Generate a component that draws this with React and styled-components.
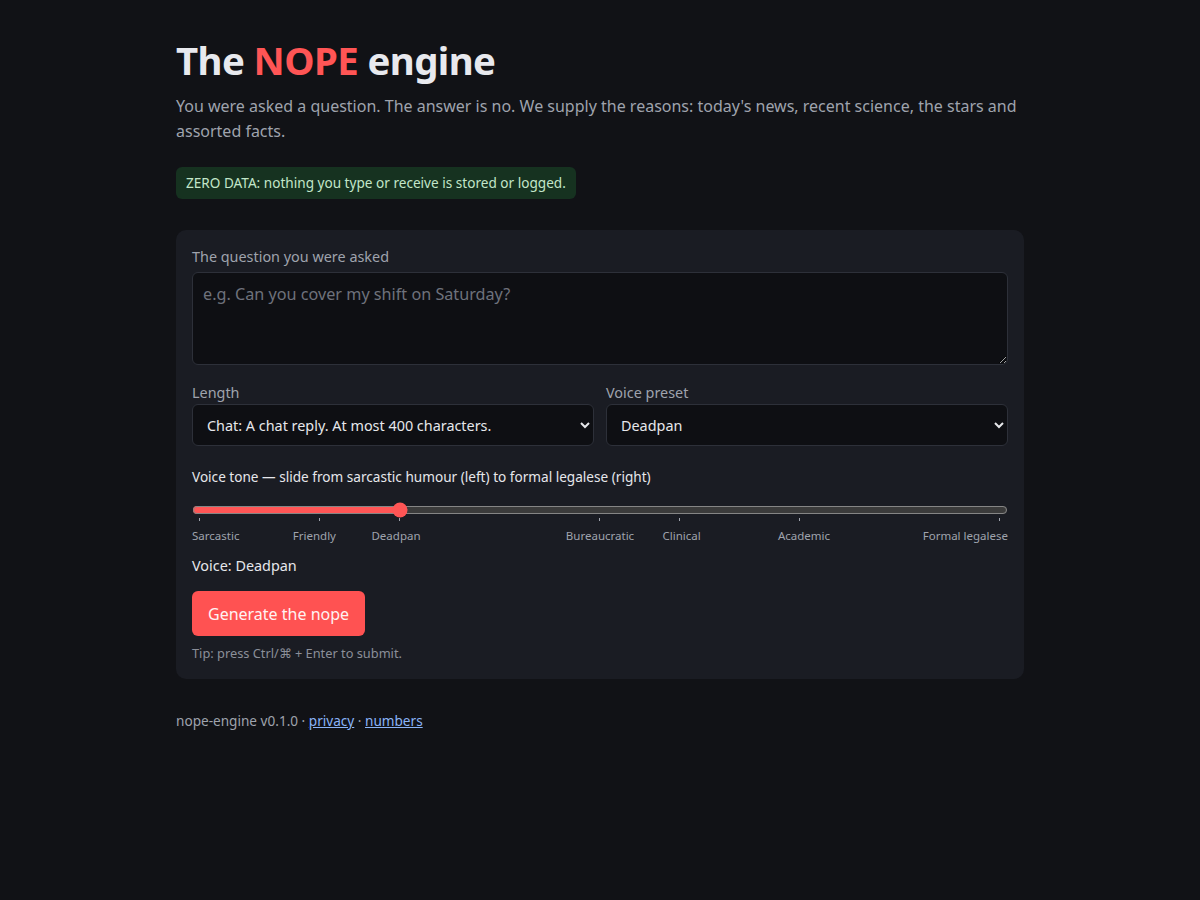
import React, { useState } from 'react'
import styled, { createGlobalStyle } from 'styled-components'

const GlobalStyle = createGlobalStyle`
    html, body {
        margin: 0;
        padding: 0;
        background: #111216;
        color: #e6e7eb;
        font-family: "Noto Sans", "DejaVu Sans", sans-serif;
        color-scheme: dark;
    }
`

const Page = styled.main`
    max-width: 848px;
    margin: 0 auto;
    padding: 36px 0 60px;
`

const Title = styled.h1`
    margin: 0;
    font-size: 38.4px;
    line-height: 48px;
    font-weight: 700;
    letter-spacing: -0.6px;
    color: #e8e9ee;

    span {
        color: #ff5555;
    }
`

const Lead = styled.p`
    margin: 10px 0 0;
    font-size: 16px;
    line-height: 25px;
    color: #9fa3ad;
`

const Badge = styled.div`
    display: inline-block;
    margin-top: 23px;
    padding: 0 10px;
    height: 32px;
    line-height: 32px;
    font-size: 13.6px;
    color: #c2e6c9;
    background: #163220;
    border-radius: 6px;
`

const Card = styled.section`
    margin-top: 31px;
    background: #1a1c23;
    border-radius: 10px;
    padding: 16px 16px 17px;
`

const Label = styled.label`
    display: block;
    font-size: 14.4px;
    line-height: 22px;
    color: ${props => props.bright ? '#e6e7eb' : '#9fa3ad'};
    margin-bottom: ${props => props.gap || 0}px;
`

const ToneLabel = styled(Label)`
    font-size: 13.6px;
    line-height: 20px;
`

const TextArea = styled.textarea`
    display: block;
    box-sizing: border-box;
    width: 100%;
    height: 93px;
    padding: 10px;
    font-family: inherit;
    font-size: 16.2px;
    line-height: 22px;
    color: #e6e7eb;
    background: #0e0f13;
    border: 1px solid #2d3039;
    border-radius: 6px;
    outline: none;

    &::placeholder {
        color: #6e727c;
    }
`

const Row = styled.div`
    display: grid;
    grid-template-columns: 1fr 1fr;
    gap: 12px;
    margin-top: 17px;
`

const Select = styled.select`
    display: block;
    box-sizing: border-box;
    width: 100%;
    height: 42px;
    padding: 0 10px;
    font-family: inherit;
    font-size: 14.4px;
    color: #e6e7eb;
    background: #0e0f13;
    border: 1px solid #2d3039;
    border-radius: 6px;
    outline: none;
`

const ToneBlock = styled.div`
    margin-top: 21px;
`

const Range = styled.input`
    display: block;
    width: 100%;
    height: 16px;
    margin: 15px 0 0;
    accent-color: #ff5555;
`

const TickRow = styled.div`
    position: relative;
    height: 4px;
`

const Tick = styled.span`
    position: absolute;
    top: 0;
    width: 1px;
    height: 3px;
    background: #9fa3ad;
`

const ScaleRow = styled.div`
    position: relative;
    height: 14px;
    margin-top: 7px;
`

const ScaleLabel = styled.span`
    position: absolute;
    top: 0;
    font-size: 11.5px;
    line-height: 14px;
    color: #9fa3ad;
    white-space: nowrap;
    transform: translateX(${props => props.shift}%);
`

const VoiceLine = styled.div`
    margin-top: 13px;
    font-size: 14.4px;
    line-height: 20px;
    color: #e6e7eb;
`

const Button = styled.button`
    display: block;
    margin-top: 15px;
    height: 45px;
    padding: 0 16px;
    font-family: inherit;
    font-size: 16px;
    color: #fff2f2;
    background: #ff5252;
    border: none;
    border-radius: 6px;
    cursor: pointer;
`

const Tip = styled.div`
    margin-top: 8px;
    font-size: 12.8px;
    line-height: 18px;
    color: #8b8f99;
`

const Footer = styled.footer`
    margin-top: 31px;
    font-size: 13.6px;
    line-height: 21px;
    color: #9fa3ad;

    a {
        color: #8ab4f8;
    }
`

const voices = [
    { name: 'Sarcastic', value: 0 },
    { name: 'Friendly', value: 15 },
    { name: 'Deadpan', value: 25 },
    { name: 'Bureaucratic', value: 50 },
    { name: 'Clinical', value: 60 },
    { name: 'Academic', value: 75 },
    { name: 'Formal legalese', value: 100 },
]

const nearestVoice = (v) =>
    voices.reduce((best, cur) => Math.abs(cur.value - v) < Math.abs(best.value - v) ? cur : best)

const App = () => {
    const [tone, setTone] = useState(25)
    const [question, setQuestion] = useState('')
    const voice = nearestVoice(tone)

    return (
        <>
            <GlobalStyle />
            <Page>
                <Title>The <span>NOPE</span> engine</Title>
                <Lead>
                    You were asked a question. The answer is no. We supply the reasons: today's news,
                    recent science, the stars and assorted facts.
                </Lead>
                <Badge>ZERO DATA: nothing you type or receive is stored or logged.</Badge>

                <Card>
                    <Label htmlFor="question" gap={4}>The question you were asked</Label>
                    <TextArea
                        id="question"
                        placeholder="e.g. Can you cover my shift on Saturday?"
                        value={question}
                        onChange={e => setQuestion(e.target.value)}
                    />

                    <Row>
                        <div>
                            <Label htmlFor="length">Length</Label>
                            <Select id="length" defaultValue="chat">
                                <option value="chat">Chat: A chat reply. At most 400 characters.</option>
                                <option value="email">Email: A short email. A few paragraphs.</option>
                                <option value="letter">Letter: A formal letter.</option>
                            </Select>
                        </div>
                        <div>
                            <Label htmlFor="preset">Voice preset</Label>
                            <Select
                                id="preset"
                                value={voice.name}
                                onChange={e => setTone(voices.find(v => v.name === e.target.value).value)}
                            >
                                {voices.map(v => <option key={v.name} value={v.name}>{v.name}</option>)}
                            </Select>
                        </div>
                    </Row>

                    <ToneBlock>
                        <ToneLabel htmlFor="tone" bright>Voice tone — slide from sarcastic humour (left) to formal legalese (right)</ToneLabel>
                        <Range
                            id="tone"
                            type="range"
                            min="0"
                            max="100"
                            value={tone}
                            onChange={e => setTone(Number(e.target.value))}
                        />
                        <TickRow>
                            {voices.map(v => (
                                <Tick key={v.name} style={{ left: `calc(7px + ${v.value / 100} * (100% - 16px))` }} />
                            ))}
                        </TickRow>
                        <ScaleRow>
                            {voices.map((v, i) => (
                                <ScaleLabel
                                    key={v.name}
                                    shift={i === 0 ? 0 : i === voices.length - 1 ? -100 : -50}
                                    style={{ left: `${v.value}%` }}
                                >
                                    {v.name}
                                </ScaleLabel>
                            ))}
                        </ScaleRow>
                    </ToneBlock>

                    <VoiceLine>Voice: {voice.name}</VoiceLine>
                    <Button type="button">Generate the nope</Button>
                    <Tip>Tip: press Ctrl/⌘ + Enter to submit.</Tip>
                </Card>

                <Footer>
                    nope-engine v0.1.0 · <a href="#">privacy</a> · <a href="#">numbers</a>
                </Footer>
            </Page>
        </>
    )
}

export default App
